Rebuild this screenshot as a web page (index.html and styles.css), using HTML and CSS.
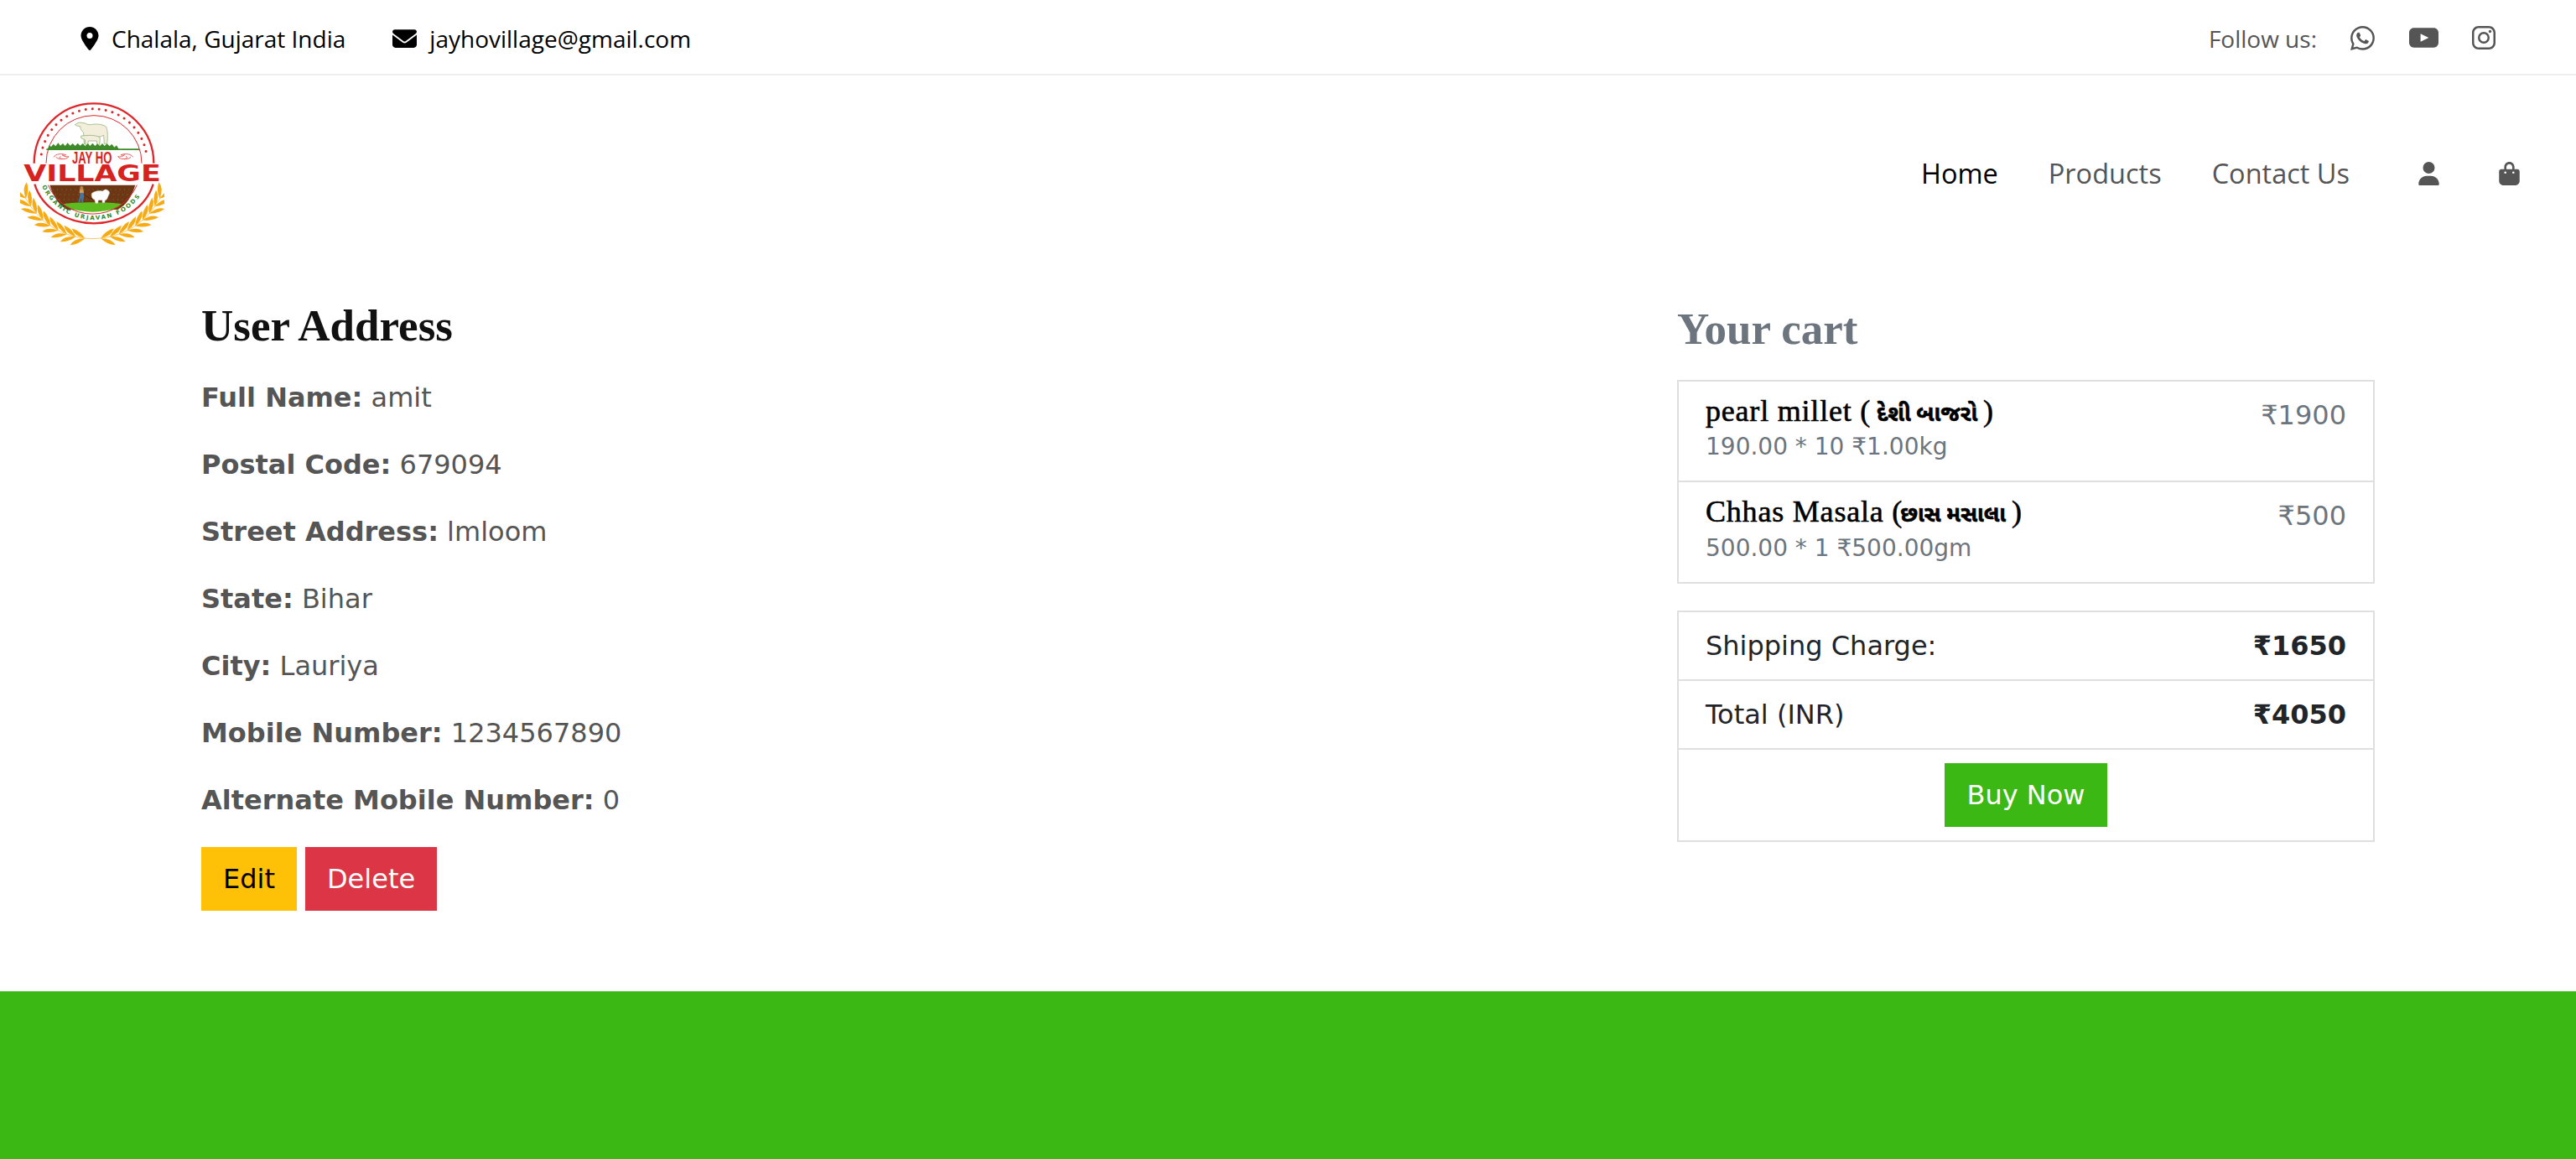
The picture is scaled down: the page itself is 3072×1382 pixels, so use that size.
FILE: index.html
```html
<!DOCTYPE html>
<html lang="en">
<head>
<meta charset="utf-8">
<title>User Address</title>
<link rel="stylesheet" href="styles.css">
</head>
<body>
<div class="topbar">
  <div class="contact">
    <span class="contact-item">
      <svg class="ico-pin" viewBox="0 0 384 512"><path d="M215.7 499.2C267 435 384 279.4 384 192C384 86 298 0 192 0S0 86 0 192c0 87.4 117 243 168.3 307.2c12.3 15.3 35.1 15.3 47.4 0zM192 128a64 64 0 1 1 0 128 64 64 0 1 1 0-128z"/></svg>
      Chalala, Gujarat India
    </span>
    <span class="contact-item">
      <svg class="ico-mail" viewBox="0 0 512 384"><path d="M48 0C21.5 0 0 21.5 0 48c0 15.1 7.1 29.3 19.2 38.4L236.8 249.6c11.4 8.5 27 8.5 38.4 0L492.8 86.4C504.9 77.3 512 63.1 512 48c0-26.5-21.500-48-48-48H48zM0 112V320c0 35.300 28.700 64 64 64H448c35.300 0 64-28.700 64-64V112L294.400 275.200c-22.800 17.100-54 17.100-76.800 0L0 112z"/></svg>
      jayhovillage@gmail.com
    </span>
  </div>
  <div class="follow">
    <span class="follow-label">Follow us:</span>
    <svg class="ico-wa" viewBox="0 0 16 16"><path d="M13.601 2.326A7.854 7.854 0 0 0 7.994 0C3.627 0 .068 3.558.064 7.926c0 1.399.366 2.76 1.057 3.965L0 16l4.204-1.102a7.933 7.933 0 0 0 3.79.965h.004c4.368 0 7.926-3.558 7.93-7.93A7.898 7.898 0 0 0 13.6 2.326zM7.994 14.521a6.573 6.573 0 0 1-3.356-.92l-.24-.144-2.494.654.666-2.433-.156-.251a6.56 6.56 0 0 1-1.007-3.505c0-3.626 2.957-6.584 6.591-6.584a6.56 6.56 0 0 1 4.66 1.931 6.557 6.557 0 0 1 1.928 4.66c-.004 3.639-2.961 6.592-6.592 6.592zm3.615-4.934c-.197-.099-1.17-.578-1.353-.646-.182-.065-.315-.099-.445.099-.133.197-.513.646-.627.775-.114.133-.232.148-.43.05-.197-.1-.836-.308-1.592-.985-.59-.525-.985-1.175-1.103-1.372-.114-.198-.011-.304.088-.403.087-.088.197-.232.296-.346.1-.114.133-.198.198-.33.065-.134.034-.248-.015-.347-.05-.099-.445-1.076-.612-1.47-.16-.389-.323-.335-.445-.34-.114-.007-.247-.007-.38-.007a.729.729 0 0 0-.529.247c-.182.198-.691.677-.691 1.654 0 .977.71 1.916.81 2.049.098.133 1.394 2.132 3.383 2.992.47.205.84.326 1.129.418.475.152.904.129 1.246.08.38-.058 1.171-.48 1.338-.943.164-.464.164-.86.114-.943-.049-.084-.182-.133-.38-.232z"/></svg>
    <svg class="ico-yt" viewBox="0 0 36 24"><path fill-rule="evenodd" d="M6 0H30C33.500 0 36 2.500 36 6V18C36 21.500 33.500 24 30 24H6C2.500 24 0 21.500 0 18V6C0 2.500 2.500 0 6 0zM14 7V17L24 12z"/></svg>
    <svg class="ico-ig" viewBox="0 0 28 28"><path fill-rule="evenodd" d="M8 0H20C24.500 0 28 3.500 28 8V20C28 24.500 24.500 28 20 28H8C3.500 28 0 24.500 0 20V8C0 3.500 3.500 0 8 0zM8 2.500C5 2.500 2.500 5 2.500 8V20C2.500 23 5 25.500 8 25.500H20C23 25.500 25.500 23 25.500 20V8C25.500 5 23 2.500 20 2.500zM14 7A7 7 0 1 1 14 21A7 7 0 1 1 14 7zM14 9.500A4.500 4.500 0 1 0 14 18.500A4.500 4.500 0 1 0 14 9.500z"/><circle cx="21.500" cy="6.500" r="1.700"/></svg>
  </div>
</div>

<nav class="navbar">
  <svg class="logo" viewBox="72 66 516 522">
    <defs>
      <g id="kern">
        <path d="M332 560Q312 534 282 530Q292 556 332 560z"/>
        <path d="M332 560Q312 584 282 590Q292 564 332 560z"/>
      </g>
      <g id="wheat">
        <path d="M332 560A271 271 0 0 1 88 408" fill="none" stroke="#f6ab14" stroke-width="2"/>
        <use href="#kern" transform="rotate(6 332 289)"/>
        <use href="#kern" transform="rotate(13 332 289)"/>
        <use href="#kern" transform="rotate(20 332 289)"/>
        <use href="#kern" transform="rotate(27 332 289)"/>
        <use href="#kern" transform="rotate(34 332 289)"/>
        <use href="#kern" transform="rotate(41 332 289)"/>
        <use href="#kern" transform="rotate(48 332 289)"/>
        <use href="#kern" transform="rotate(55 332 289)"/>
        <use href="#kern" transform="rotate(62 332 289)"/>
      </g>
    </defs>
    <g fill="#f6ab14">
      <use href="#wheat"/>
      <use href="#wheat" transform="translate(664 0) scale(-1 1)"/>
    </g>
    <path d="M122 290A214 214 0 0 1 550 290" fill="none" stroke="#df262a" stroke-width="7"/>
    <path d="M124 365C150 450 240 505 336 505C432 505 522 450 548 365" fill="none" stroke="#df262a" stroke-width="7"/>
    <path d="M148 258A190 190 0 0 1 524 258" fill="none" stroke="#df262a" stroke-width="9" stroke-linecap="round" stroke-dasharray="0.100 24"/>
    <path d="M165 290A171 171 0 0 1 507 290" fill="none" stroke="#df262a" stroke-width="3"/>
    <path d="M268 152l14-8 18 2c6 0 14 8 24 6 18-4 46-2 56 8 6 14 6 40 3 60h-10l-2-30c-10 6-30 8-44 6l-14-2-2 26h-10l-2-40c-8-6-12-14-12-22l-12-2z" fill="#f3eedb" stroke="#7fa867" stroke-width="2"/>
    <path d="M290 192l30-2c14 0 30 2 38 8l-2 28h-8l-2-16h-30l-2 16h-8l-2-20-14-6z" fill="#f3eedb" stroke="#7fa867" stroke-width="2"/>
    <path d="M170 240l6-14 7 5 8-10 8 8 9-12 8 10 9-8 8 9 9-11 9 10 9-8 9 9 9-10 9 9 9-8 9 10 9-10 8 9 9-10 9 10 9-8 8 9 9-10 8 9 9-8 9 9 8-8 9 12 8-7 8 13 3 4z" fill="#3f8a2a"/>
    <path d="M166 238h332v5H166z" fill="#3f8a2a"/>
    <path d="M192 268c8-12 28-14 44-8-6 2-10 2-14 0 8 6 16 8 24 6-4 8-16 10-26 8-10-2-8-8-2-8M200 268c8 8 20 8 30 6" fill="none" stroke="#e8605f" stroke-width="3"/>
    <path d="M476 268c-8-12-28-14-44-8 6 2 10 2 14 0-8 6-16 8-24 6 4 8 16 10 26 8 10-2 8-8 2-8M468 268c-8 8-20 8-30 6" fill="none" stroke="#e8605f" stroke-width="3"/>
    <text class="logo-jay" x="258" y="290" textLength="142" lengthAdjust="spacingAndGlyphs">JAY HO</text>
    <text class="logo-vil" x="85" y="355" textLength="490" lengthAdjust="spacingAndGlyphs">VILLAGE</text>
    <path d="M178 368H484C472 408 452 440 420 456H240C210 440 190 408 178 368z" fill="#6e3614"/>
    <path d="M188 384H474M198 402H464M212 420H450" fill="none" stroke="#4f8a2a" stroke-width="3" stroke-dasharray="3 13"/>
    <path d="M226 436C262 428 400 428 436 436C424 450 400 462 332 464C264 462 240 450 226 436z" fill="#5cbb1f"/>
    <path d="M172 368A174 174 0 0 0 490 368" fill="none" stroke="#df262a" stroke-width="3"/>
    <path d="M328 398c6-6 24-12 38-8l10-6c8 0 16 6 16 12l-6 14c-2 8-6 12-10 12l-2 9h-8v-9h-14l-2 11h-8l-4-14c-6 0-12-8-10-21z" fill="#fff" stroke="#cfcabb" stroke-width="1.500"/>
    <path d="M284 390h14l3 16-4 24h-6l1-18-6 18h-6l6-24z" fill="#3e78a8"/>
    <path d="M286 382l12 0 2 14h-16z" fill="#d69a55"/>
    <circle cx="292" cy="378" r="6" fill="#b9834d"/>
    <path d="M300 402l30 18" stroke="#4a2c12" stroke-width="3"/>
    <path id="ring" d="M150 372A204 204 0 0 0 522 372" fill="none"/>
    <text class="logo-org"><textPath href="#ring" textLength="425" lengthAdjust="spacing">ORGANIC URJAVAN FOODS</textPath></text>
  </svg>
  <div class="nav-links">
    <a class="nav-link active">Home</a>
    <a class="nav-link">Products</a>
    <a class="nav-link">Contact Us</a>
    <svg class="ico-user" viewBox="0 0 448 512"><path d="M224 256a128 128 0 1 0 0-256 128 128 0 1 0 0 256zm-45.700 48C79.800 304 0 383.800 0 482.300 0 498.700 13.300 512 29.700 512h388.600c16.400 0 29.700-13.300 29.700-29.700C448 383.800 368.200 304 269.700 304h-91.400z"/></svg>
    <svg class="ico-bag" viewBox="0 0 448 512"><path d="M160 112c0-35.300 28.700-64 64-64s64 28.700 64 64v48H160v-48zm-48 48H48c-26.500 0-48 21.500-48 48V416c0 53 43 96 96 96H352c53 0 96-43 96-96V208c0-26.500-21.500-48-48-48H336V112C336 50.100 285.900 0 224 0S112 50.100 112 112v48zm24 48a24 24 0 1 1 0 48 24 24 0 1 1 0-48zm152 24a24 24 0 1 1 48 0 24 24 0 1 1-48 0z"/></svg>
  </div>
</nav>

<main class="content">
  <section class="address">
    <h2 class="title">User Address</h2>
    <p class="field"><strong>Full Name:</strong> amit</p>
    <p class="field"><strong>Postal Code:</strong> 679094</p>
    <p class="field"><strong>Street Address:</strong> lmloom</p>
    <p class="field"><strong>State:</strong> Bihar</p>
    <p class="field"><strong>City:</strong> Lauriya</p>
    <p class="field"><strong>Mobile Number:</strong> 1234567890</p>
    <p class="field"><strong>Alternate Mobile Number:</strong> 0</p>
    <div class="actions">
      <a class="btn btn-edit">Edit</a>
      <a class="btn btn-delete">Delete</a>
    </div>
  </section>
  <aside class="cart">
    <h3 class="cart-title">Your cart</h3>
    <ul class="list">
      <li class="row">
        <div>
          <h6 class="item-name">pearl millet ( <span class="guj">દેશી બાજરો</span> )</h6>
          <small class="item-meta">190.00 * 10 ₹1.00kg</small>
        </div>
        <span class="item-price">₹1900</span>
      </li>
      <li class="row">
        <div>
          <h6 class="item-name">Chhas Masala (<span class="guj">છાસ મસાલા</span> )</h6>
          <small class="item-meta">500.00 * 1 ₹500.00gm</small>
        </div>
        <span class="item-price">₹500</span>
      </li>
    </ul>
    <ul class="list">
      <li class="row"><span>Shipping Charge:</span><strong>₹1650</strong></li>
      <li class="row"><span>Total (INR)</span><strong>₹4050</strong></li>
      <li class="row row-center"><a class="btn btn-buy">Buy Now</a></li>
    </ul>
  </aside>
</main>

<footer class="footer"></footer>
</body>
</html>
```

FILE: styles.css
```css
* { box-sizing: border-box; }
html, body { margin: 0; padding: 0; }
body {
  font-family: "DejaVu Sans", sans-serif;
  font-size: 32px;
  line-height: 48px;
  color: #555;
  background: #fff;
  overflow: hidden;
  height: 1382px;
}
.topbar {
  height: 90px;
  border-bottom: 2px solid #eee;
  display: flex;
  justify-content: space-between;
  align-items: center;
  padding: 2px 96px 0;
  font-family: "Open Sans", sans-serif;
  font-size: 28px;
}
.contact { display: flex; gap: 56px; color: #000; padding-top: 2px; }
.contact-item { display: flex; align-items: center; gap: 15px; }
.contact-item svg { fill: #000; }
.ico-pin { width: 22px; height: 28px; }
.ico-mail { width: 29px; height: 22px; }
.follow { display: flex; align-items: center; color: #555; fill: #555; }
.follow-label { margin-right: 40px; padding-top: 2px; }
.ico-wa { width: 29px; height: 29px; margin-right: 41px; }
.ico-yt { width: 35px; height: 24px; margin-right: 40px; }
.ico-ig { width: 28px; height: 28px; }
.navbar {
  height: 234px;
  display: flex;
  justify-content: space-between;
  align-items: center;
  padding: 0 67px 0 24px;
}
.logo { width: 172px; height: 174px; display: block; }
.logo-jay { font: 700 62px "Liberation Sans", sans-serif; fill: #d8221f; }
.logo-vil { font: 700 82px "DejaVu Sans", sans-serif; fill: #d8221f; }
.logo-org { font: 700 21px "DejaVu Sans", sans-serif; fill: #2f8a2a; }
.nav-links {
  display: flex;
  align-items: center;
  font-family: "Open Sans", sans-serif;
  font-weight: 500;
  font-size: 32.5px;
  fill: #555;
}
.nav-link { color: #555; margin-right: 60px; }
.nav-link.active { color: #000; }
.ico-user { width: 25px; height: 28px; margin-left: 22px; margin-right: 71px; }
.ico-bag { width: 25px; height: 28px; }
.content {
  display: flex;
  justify-content: space-between;
  padding: 32px 240px 0;
  height: 858px;
}
.title {
  font-family: "Liberation Serif", serif;
  font-weight: 700;
  font-size: 53px;
  line-height: 64px;
  color: #111;
  margin: 0 0 30px;
}
.field { margin: 0 0 32px; }
.actions { display: flex; gap: 10px; }
.btn { display: block; padding: 14px 26px; }
.btn-edit { background: #ffc107; color: #000; }
.btn-delete { background: #dc3545; color: #fff; }
.btn-buy { background: #3cb815; color: #fff; }
.cart { width: 832px; }
.cart-title {
  font-family: "Liberation Serif", serif;
  font-weight: 700;
  font-size: 53px;
  line-height: 64px;
  color: #6c757d;
  margin: 4px 0 29px;
}
.list {
  list-style: none;
  margin: 0 0 32px;
  padding: 0;
  border: 2px solid #dfdfdf;
  color: #212529;
}
.row {
  display: flex;
  justify-content: space-between;
  padding: 16px 32px;
  border-bottom: 2px solid #dfdfdf;
}
.row:last-child { border-bottom: 0; }
.row-center { justify-content: center; }
.item-name {
  font-family: "Liberation Serif", "Noto Sans Gujarati", serif;
  font-weight: 500;
  font-size: 36px;
  line-height: 38.4px;
  letter-spacing: 0.8px;
  -webkit-text-stroke: 0.6px #000;
  color: #000;
  margin: 0;
}
.guj { font-size: 26.5px; line-height: 0; letter-spacing: 0; font-weight: 700; margin: 0 -3px; }
.item-meta { display: block; font-size: 28px; line-height: 48px; color: #6c757d; }
.item-price { color: #6c757d; }
.footer { height: 200px; background: #3cb815; }
```
